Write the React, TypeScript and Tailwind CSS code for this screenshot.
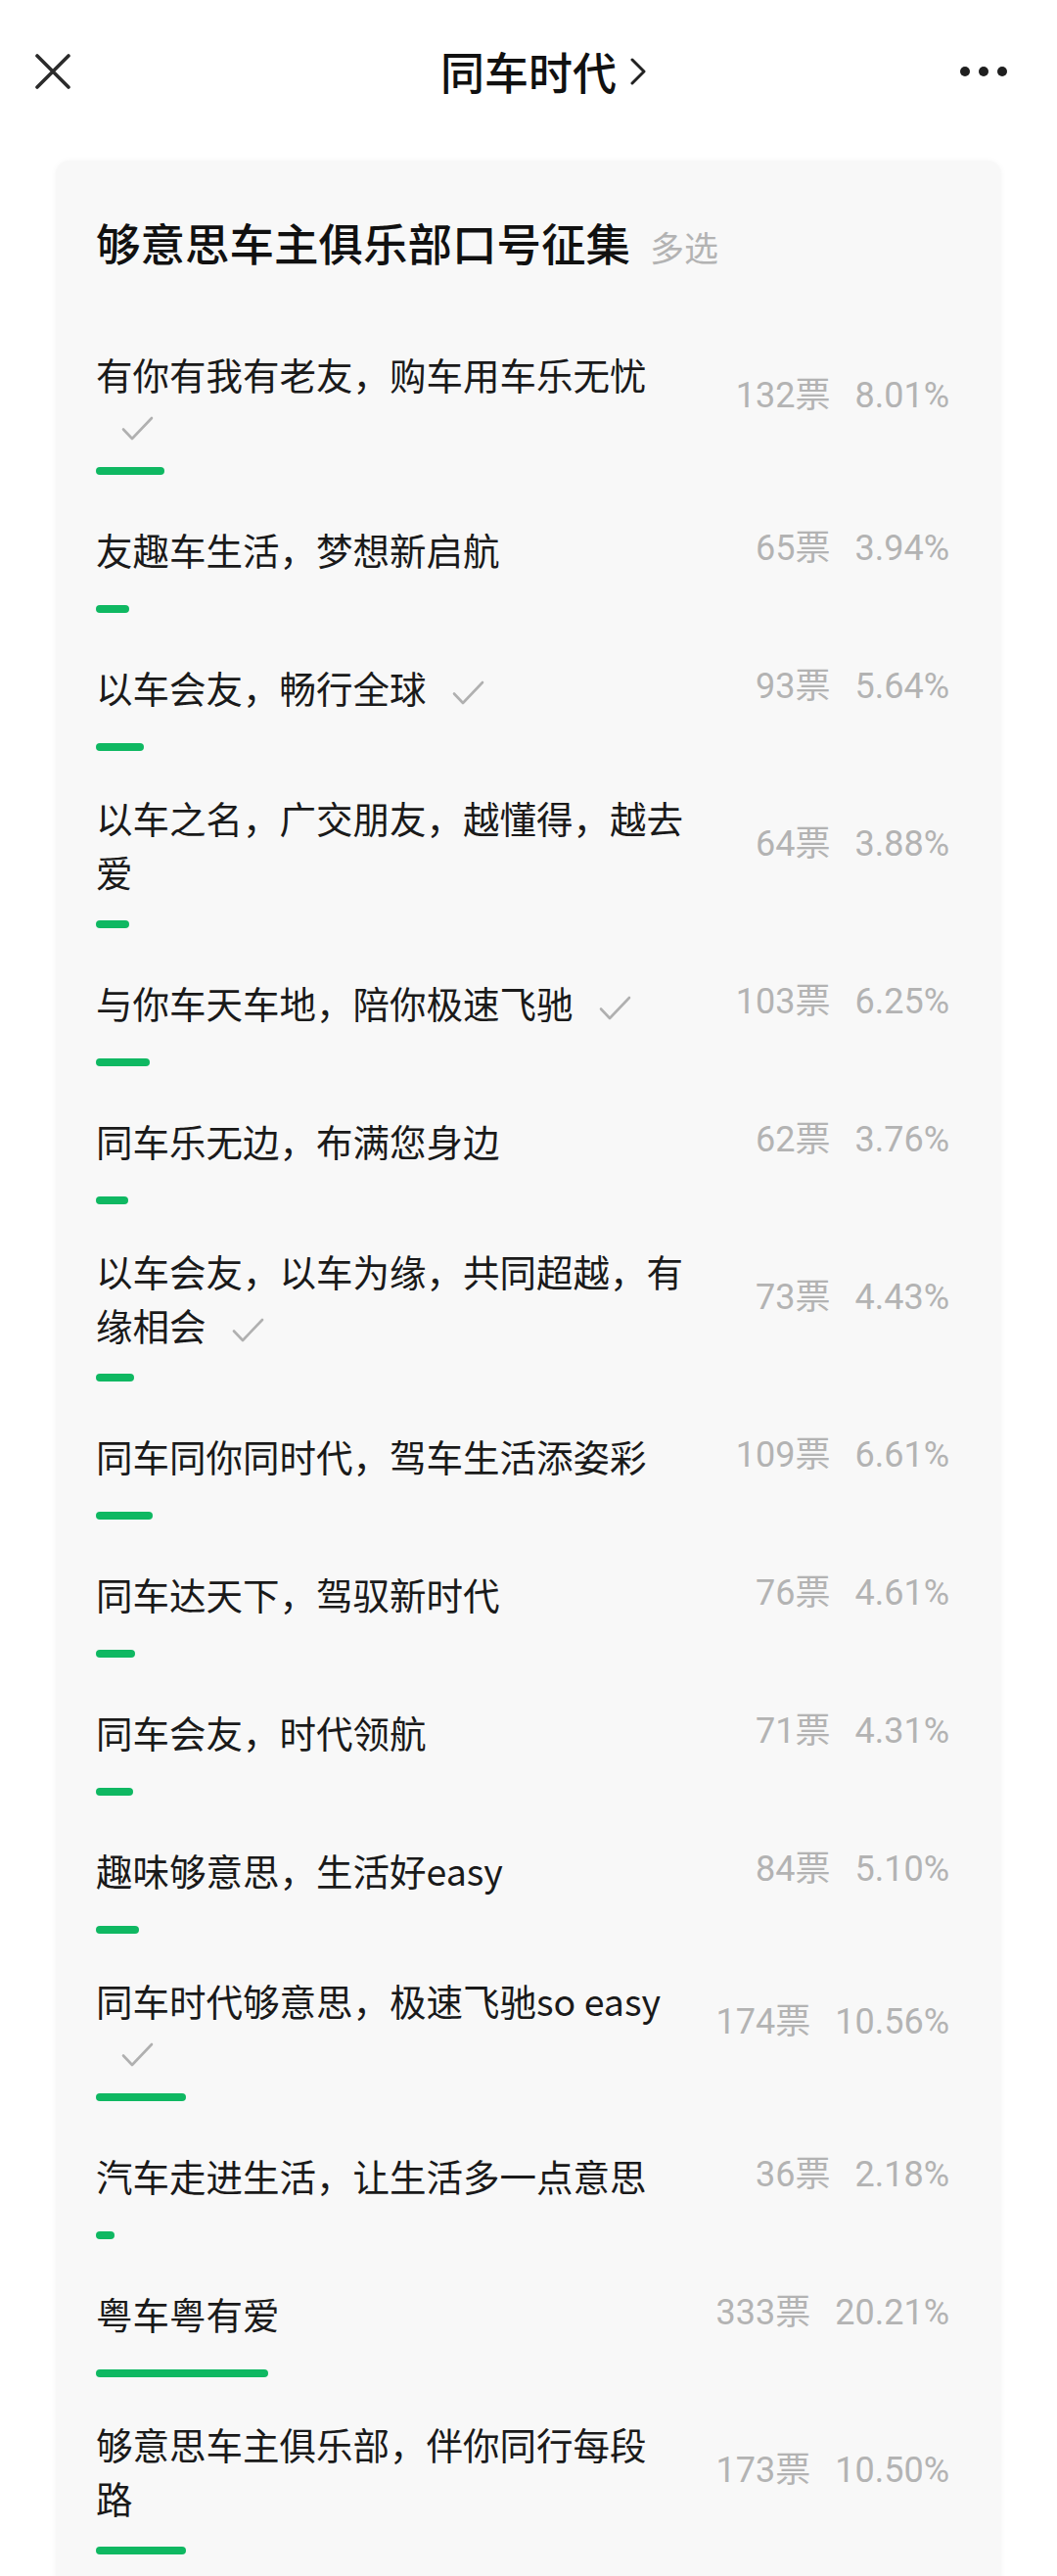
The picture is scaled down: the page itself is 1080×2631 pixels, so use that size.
import React from "react";

interface PollOption {
  text: string;
  votes: number;
  pct: string;
  picked?: boolean;
}

const options: PollOption[] = [
  { text: "有你有我有老友，购车用车乐无忧", votes: 132, pct: "8.01", picked: true },
  { text: "友趣车生活，梦想新启航", votes: 65, pct: "3.94" },
  { text: "以车会友，畅行全球", votes: 93, pct: "5.64", picked: true },
  { text: "以车之名，广交朋友，越懂得，越去爱", votes: 64, pct: "3.88" },
  { text: "与你车天车地，陪你极速飞驰", votes: 103, pct: "6.25", picked: true },
  { text: "同车乐无边，布满您身边", votes: 62, pct: "3.76" },
  { text: "以车会友，以车为缘，共同超越，有缘相会", votes: 73, pct: "4.43", picked: true },
  { text: "同车同你同时代，驾车生活添姿彩", votes: 109, pct: "6.61" },
  { text: "同车达天下，驾驭新时代", votes: 76, pct: "4.61" },
  { text: "同车会友，时代领航", votes: 71, pct: "4.31" },
  { text: "趣味够意思，生活好easy", votes: 84, pct: "5.10" },
  { text: "同车时代够意思，极速飞驰so easy", votes: 174, pct: "10.56", picked: true },
  { text: "汽车走进生活，让生活多一点意思", votes: 36, pct: "2.18" },
  { text: "粤车粤有爱", votes: 333, pct: "20.21" },
  { text: "够意思车主俱乐部，伴你同行每段路", votes: 173, pct: "10.50" },
];

const CheckMark = () => (
  <svg
    width="33"
    height="25"
    viewBox="0 0 33 25"
    className="inline-block align-middle ml-[26px]"
    fill="none"
    stroke="#b0b0b0"
    strokeWidth="2.6"
    strokeLinecap="round"
    strokeLinejoin="round"
  >
    <path d="M2 13.5 L11 23 L31 2" />
  </svg>
);

const OptionRow = ({ option }: { option: PollOption }) => (
  <div className="flex flex-col">
    <div className="flex items-center min-h-[70px]">
      <div className="flex-1 min-w-0 text-[37.5px] leading-[45px] text-[#1a1a1a]">
        <span className="leading-[55px]">{option.text}</span>
        {option.picked && <CheckMark />}
      </div>
      <div className="shrink-0 ml-[40px] flex gap-[25px] text-[36px] leading-[45px] text-[#b3b3b3] font-['Roboto','Noto_Sans_CJK_SC',sans-serif]">
        <span>{option.votes}票</span>
        <span>{option.pct}%</span>
      </div>
    </div>
    {/* result bar */}
    <div className="mt-[23px] h-[8px]">
      <div className="h-[8px] rounded-full bg-[#0fb862]" style={{ width: `${option.pct}%` }} />
    </div>
  </div>
);

export default function App() {
  return (
    <div className="w-[1080px] h-[2631px] overflow-hidden bg-white font-['Noto_Sans_CJK_SC',sans-serif]">
      {/* top bar */}
      <div className="flex items-center h-[146px]">
        <div className="w-[200px] pl-[36px] flex justify-start">
          <svg width="36" height="36" viewBox="0 0 36 36" stroke="#2b2b2b" strokeWidth="3.6" strokeLinecap="round">
            <path d="M2 2 L34 34 M34 2 L2 34" />
          </svg>
        </div>
        <div className="flex-1 flex justify-center items-center pl-[30px]">
          <span className="text-[45px] leading-[60px] font-medium text-[#111] whitespace-nowrap">同车时代</span>
          <svg width="16" height="28" viewBox="0 0 16 28" className="ml-[14px]" fill="none" stroke="#222" strokeWidth="3" strokeLinecap="round" strokeLinejoin="round">
            <path d="M2 2 L14 14 L2 26" />
          </svg>
        </div>
        <div className="w-[200px] pr-[51px] flex justify-end gap-[9px]">
          <span className="w-[10px] h-[10px] rounded-full bg-[#1f1f1f]" />
          <span className="w-[10px] h-[10px] rounded-full bg-[#1f1f1f]" />
          <span className="w-[10px] h-[10px] rounded-full bg-[#1f1f1f]" />
        </div>
      </div>

      {/* poll card */}
      <div className="mt-[18px] mx-[57px] rounded-[14px] bg-[#f8f8f8] shadow-[0_0_6px_rgba(0,0,0,0.04)] pl-[41px] pr-[53px] pt-[53px] pb-[60px]">
        <div className="flex items-baseline h-[60px] leading-[60px]">
          <span className="text-[45.5px] font-medium text-[#111]">够意思车主俱乐部口号征集</span>
          <span className="ml-[20px] text-[35px] text-[#b3b3b3]">多选</span>
        </div>
        <div className="mt-[77px] flex flex-col gap-[40px]">
          {options.map((o) => (
            <OptionRow key={o.text} option={o} />
          ))}
        </div>
      </div>
    </div>
  );
}
